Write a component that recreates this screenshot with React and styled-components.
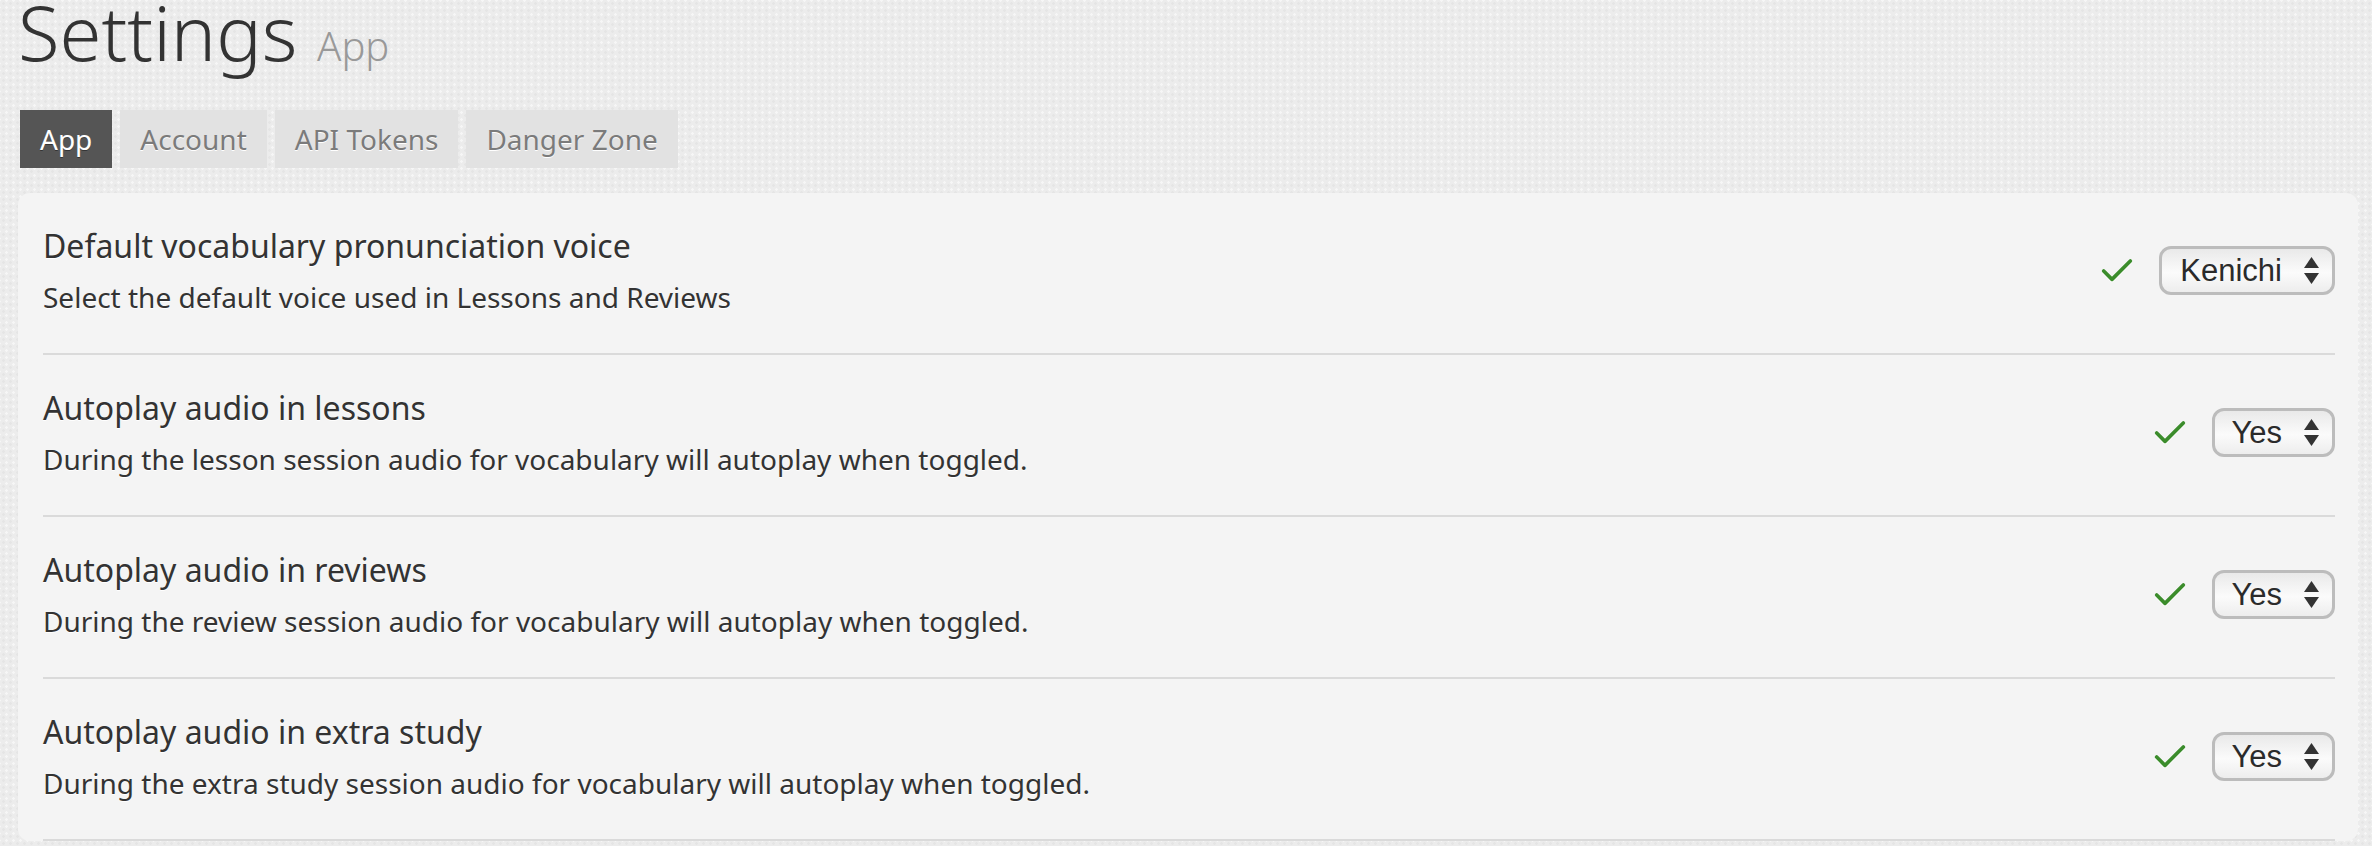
import React from "react";
import styled, { createGlobalStyle } from "styled-components";
import { Check } from "lucide-react";

const GlobalStyle = createGlobalStyle`
  html, body {
    margin: 0;
    padding: 0;
  }
  body {
    font-family: "Noto Sans", "Open Sans", sans-serif;
    color: #333;
    background-color: #ececec;
    background-image:
      radial-gradient(rgba(0, 0, 0, 0.03) 1px, transparent 1.6px),
      radial-gradient(rgba(255, 255, 255, 0.5) 1px, transparent 1.6px);
    background-size: 7px 7px, 7px 7px;
    background-position: 0 0, 3px 4px;
  }
`;

const Page = styled.div`
  padding: 0 14px 0 18px;
  height: 846px;
  overflow: hidden;
`;

const Heading = styled.h1`
  margin: 0;
  font-size: 76px;
  font-weight: 300;
  line-height: 64px;
  color: #333;
`;

const SubHeading = styled.small`
  font-size: 40px;
  font-weight: 300;
  line-height: 0;
  color: #999;
`;

const Tabs = styled.nav`
  display: flex;
  gap: 8px;
  margin: 46px 0 25px 2px;
`;

const Tab = styled.a`
  display: block;
  padding: 0 20px;
  height: 58px;
  line-height: 58px;
  font-size: 28px;
  text-decoration: none;
  background: ${(p) => (p.$active ? "#555" : "#e2e2e2")};
  color: ${(p) => (p.$active ? "#fff" : "#7b7b7b")};
  text-shadow: ${(p) =>
    p.$active ? "0 1px 0 rgba(0,0,0,0.4)" : "0 1px 0 #fff"};
`;

const Card = styled.section`
  background: #f4f4f4;
  border-radius: 12px;
  padding: 0 23px 0 25px;
`;

const Row = styled.div`
  display: flex;
  align-items: center;
  justify-content: space-between;
  padding: 31px 0 36px;
  border-bottom: 2px solid #dadada;
`;

const Text = styled.div`
  display: flex;
  flex-direction: column;
`;

const Title = styled.h2`
  margin: 0;
  font-size: 32px;
  font-weight: 400;
  line-height: 44px;
  color: #333;
  text-shadow: 0 1px 0 #fff;
`;

const Description = styled.p`
  margin: 9px 0 0;
  font-size: 28px;
  line-height: 40px;
  color: #333;
  text-shadow: 0 1px 0 #fff;
`;

const Control = styled.div`
  display: flex;
  align-items: center;
  gap: 22px;
`;

const Saved = styled(Check)`
  color: #3b8c2b;
  filter: drop-shadow(0 1px 0 #fff);
`;

const Select = styled.div`
  box-sizing: border-box;
  display: flex;
  align-items: center;
  height: 49px;
  padding: 0 13px 0 ${(p) => p.$pad}px;
  border: 3px solid #bcbcbc;
  border-radius: 12px;
  background: linear-gradient(#e9e9e9, #fbfbfb 55%, #ededed);
  font-family: "Liberation Sans", Arial, sans-serif;
  font-size: 31px;
  color: #2b2b2b;
`;

const Value = styled.span`
  margin-right: 22px;
`;

const Arrows = () => (
  <svg width="15" height="27" viewBox="0 0 15 27" aria-hidden="true">
    <path d="M7.5 0 L15 11 L0 11 Z" fill="#333" />
    <path d="M0 16 L15 16 L7.5 27 Z" fill="#333" />
  </svg>
);

const settings = [
  {
    title: "Default vocabulary pronunciation voice",
    description: "Select the default voice used in Lessons and Reviews",
    value: "Kenichi",
    pad: 18,
  },
  {
    title: "Autoplay audio in lessons",
    description:
      "During the lesson session audio for vocabulary will autoplay when toggled.",
    value: "Yes",
    pad: 16,
  },
  {
    title: "Autoplay audio in reviews",
    description:
      "During the review session audio for vocabulary will autoplay when toggled.",
    value: "Yes",
    pad: 16,
  },
  {
    title: "Autoplay audio in extra study",
    description:
      "During the extra study session audio for vocabulary will autoplay when toggled.",
    value: "Yes",
    pad: 16,
  },
];

const tabs = ["App", "Account", "API Tokens", "Danger Zone"];

export default function App() {
  return (
    <>
      <GlobalStyle />
      <Page>
        <Heading>
          Settings <SubHeading>App</SubHeading>
        </Heading>
        <Tabs>
          {tabs.map((t) => (
            <Tab key={t} href="#" $active={t === "App"}>
              {t}
            </Tab>
          ))}
        </Tabs>
        <Card>
          {settings.map((s) => (
            <Row key={s.title}>
              <Text>
                <Title>{s.title}</Title>
                <Description>{s.description}</Description>
              </Text>
              <Control>
                <Saved size={40} strokeWidth={2.2} />
                <Select $pad={s.pad}>
                  <Value>{s.value}</Value>
                  <Arrows />
                </Select>
              </Control>
            </Row>
          ))}
        </Card>
      </Page>
    </>
  );
}
